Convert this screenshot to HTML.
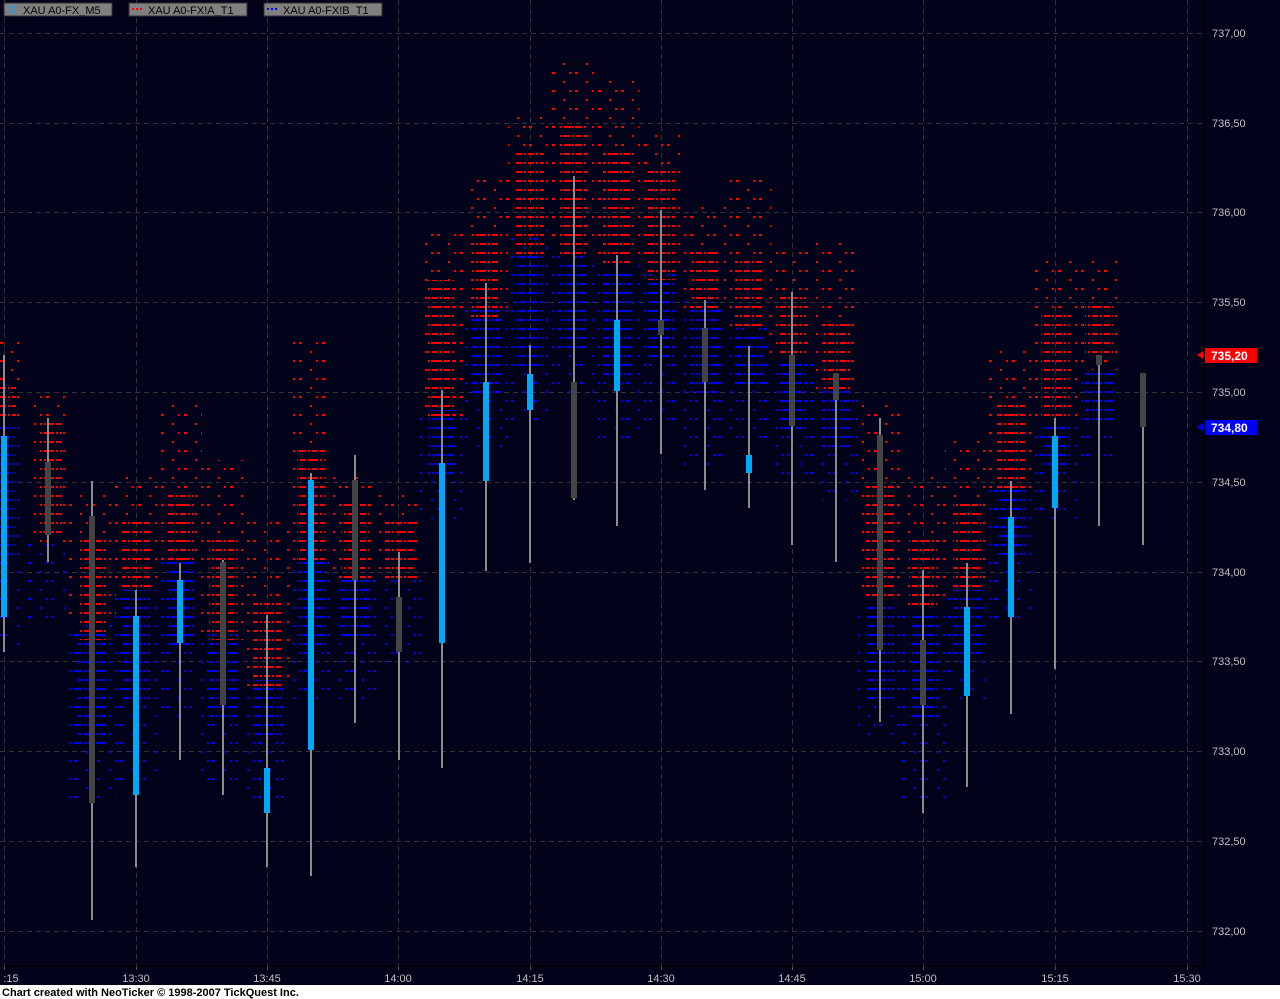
<!DOCTYPE html>
<html><head><meta charset="utf-8"><style>
html,body{margin:0;padding:0;background:#02021a;width:1280px;height:999px;overflow:hidden}
svg{display:block}
text{font-family:"Liberation Sans","DejaVu Sans",sans-serif}
</style></head><body>
<svg width="1280" height="999" viewBox="0 0 1280 999" xmlns="http://www.w3.org/2000/svg">
<defs>
<pattern id="rd" width="12" height="9" patternUnits="userSpaceOnUse"><rect x="0" y="0" width="6" height="2" fill="#f00"/><rect x="8" y="0" width="2" height="2" fill="#f00"/></pattern>
<pattern id="rs" width="23" height="18" patternUnits="userSpaceOnUse"><rect x="0" y="0" width="3" height="2" fill="#f00"/><rect x="11" y="9" width="2" height="2" fill="#f00"/><rect x="17" y="0" width="2" height="2" fill="#f00"/></pattern>
<pattern id="bd" width="12" height="9" patternUnits="userSpaceOnUse" x="3" y="4"><rect x="0" y="0" width="7" height="2" fill="#00f"/><rect x="9" y="0" width="2" height="2" fill="#00f"/></pattern>
<pattern id="bs" width="23" height="18" patternUnits="userSpaceOnUse" x="5" y="4"><rect x="0" y="0" width="3" height="2" fill="#00f"/><rect x="12" y="9" width="2" height="2" fill="#00f"/><rect x="18" y="0" width="2" height="2" fill="#00f"/></pattern>
</defs>
<rect width="1280" height="999" fill="#02021a"/>
<g stroke="#333" stroke-dasharray="5,4" stroke-width="1">
<line x1="0" y1="33.5" x2="1204" y2="33.5"/><line x1="0" y1="123.5" x2="1204" y2="123.5"/><line x1="0" y1="212.5" x2="1204" y2="212.5"/><line x1="0" y1="302.5" x2="1204" y2="302.5"/><line x1="0" y1="392.5" x2="1204" y2="392.5"/><line x1="0" y1="482.5" x2="1204" y2="482.5"/><line x1="0" y1="572.5" x2="1204" y2="572.5"/><line x1="0" y1="661.5" x2="1204" y2="661.5"/><line x1="0" y1="751.5" x2="1204" y2="751.5"/><line x1="0" y1="841.5" x2="1204" y2="841.5"/><line x1="0" y1="931.5" x2="1204" y2="931.5"/>
<line x1="4.5" y1="0" x2="4.5" y2="965"/><line x1="136.5" y1="0" x2="136.5" y2="965"/><line x1="267.5" y1="0" x2="267.5" y2="965"/><line x1="398.5" y1="0" x2="398.5" y2="965"/><line x1="530.5" y1="0" x2="530.5" y2="965"/><line x1="661.5" y1="0" x2="661.5" y2="965"/><line x1="792.5" y1="0" x2="792.5" y2="965"/><line x1="923.5" y1="0" x2="923.5" y2="965"/><line x1="1055.5" y1="0" x2="1055.5" y2="965"/><line x1="1187.5" y1="0" x2="1187.5" y2="965"/>
</g>
<g>
<rect x="-16" y="340" width="38" height="80" fill="url(#rs)"/><rect x="-16" y="420" width="38" height="230" fill="url(#bs)"/>
<rect x="28" y="395" width="40" height="150" fill="url(#rs)"/><rect x="28" y="540" width="40" height="80" fill="url(#bs)"/>
<rect x="68" y="490" width="48" height="130" fill="url(#rs)"/><rect x="68" y="620" width="48" height="180" fill="url(#bs)"/>
<rect x="114" y="470" width="44" height="120" fill="url(#rs)"/><rect x="114" y="590" width="44" height="190" fill="url(#bs)"/>
<rect x="158" y="400" width="44" height="160" fill="url(#rs)"/><rect x="158" y="560" width="44" height="160" fill="url(#bs)"/>
<rect x="201" y="460" width="44" height="180" fill="url(#rs)"/><rect x="201" y="630" width="44" height="150" fill="url(#bs)"/>
<rect x="245" y="520" width="44" height="170" fill="url(#rs)"/><rect x="245" y="680" width="44" height="120" fill="url(#bs)"/>
<rect x="289" y="340" width="44" height="220" fill="url(#rs)"/><rect x="289" y="560" width="44" height="140" fill="url(#bs)"/>
<rect x="333" y="470" width="44" height="110" fill="url(#rs)"/><rect x="333" y="580" width="44" height="120" fill="url(#bs)"/>
<rect x="377" y="490" width="44" height="90" fill="url(#rs)"/><rect x="377" y="580" width="44" height="90" fill="url(#bs)"/>
<rect x="420" y="230" width="44" height="190" fill="url(#rs)"/><rect x="420" y="410" width="44" height="110" fill="url(#bs)"/>
<rect x="464" y="180" width="44" height="140" fill="url(#rs)"/><rect x="464" y="310" width="44" height="140" fill="url(#bs)"/>
<rect x="508" y="110" width="44" height="120" fill="url(#rs)"/><rect x="508" y="230" width="44" height="190" fill="url(#bs)"/>
<rect x="552" y="60" width="44" height="190" fill="url(#rs)"/><rect x="552" y="250" width="44" height="150" fill="url(#bs)"/>
<rect x="595" y="80" width="44" height="180" fill="url(#rs)"/><rect x="595" y="260" width="44" height="180" fill="url(#bs)"/>
<rect x="639" y="130" width="44" height="140" fill="url(#rs)"/><rect x="639" y="270" width="44" height="150" fill="url(#bs)"/>
<rect x="683" y="200" width="44" height="110" fill="url(#rs)"/><rect x="683" y="300" width="44" height="170" fill="url(#bs)"/>
<rect x="727" y="180" width="44" height="150" fill="url(#rs)"/><rect x="727" y="320" width="44" height="120" fill="url(#bs)"/>
<rect x="770" y="250" width="44" height="110" fill="url(#rs)"/><rect x="770" y="360" width="44" height="120" fill="url(#bs)"/>
<rect x="814" y="240" width="44" height="150" fill="url(#rs)"/><rect x="814" y="390" width="44" height="110" fill="url(#bs)"/>
<rect x="858" y="400" width="44" height="200" fill="url(#rs)"/><rect x="858" y="600" width="44" height="140" fill="url(#bs)"/>
<rect x="901" y="470" width="44" height="140" fill="url(#rs)"/><rect x="901" y="610" width="44" height="190" fill="url(#bs)"/>
<rect x="945" y="440" width="44" height="150" fill="url(#rs)"/><rect x="945" y="590" width="44" height="110" fill="url(#bs)"/>
<rect x="989" y="350" width="44" height="140" fill="url(#rs)"/><rect x="989" y="490" width="44" height="130" fill="url(#bs)"/>
<rect x="1033" y="260" width="44" height="160" fill="url(#rs)"/><rect x="1033" y="420" width="44" height="100" fill="url(#bs)"/>
<rect x="1077" y="260" width="44" height="110" fill="url(#rs)"/><rect x="1077" y="370" width="40" height="90" fill="url(#bs)"/>
</g>
<g>
<rect x="-6" y="380" width="22" height="40" fill="url(#rd)"/><rect x="-6" y="420" width="22" height="140" fill="url(#bd)"/>
<rect x="40" y="420" width="22" height="120" fill="url(#rd)"/>
<rect x="78" y="540" width="28" height="100" fill="url(#rd)"/><rect x="78" y="630" width="28" height="120" fill="url(#bd)"/>
<rect x="122" y="520" width="28" height="70" fill="url(#rd)"/><rect x="122" y="590" width="28" height="110" fill="url(#bd)"/>
<rect x="166" y="490" width="28" height="70" fill="url(#rd)"/><rect x="166" y="560" width="28" height="90" fill="url(#bd)"/>
<rect x="209" y="540" width="28" height="100" fill="url(#rd)"/><rect x="209" y="640" width="28" height="80" fill="url(#bd)"/>
<rect x="253" y="600" width="28" height="90" fill="url(#rd)"/><rect x="253" y="680" width="28" height="60" fill="url(#bd)"/>
<rect x="297" y="450" width="28" height="110" fill="url(#rd)"/><rect x="297" y="560" width="28" height="90" fill="url(#bd)"/>
<rect x="341" y="500" width="28" height="80" fill="url(#rd)"/><rect x="341" y="580" width="28" height="60" fill="url(#bd)"/>
<rect x="385" y="520" width="28" height="60" fill="url(#rd)"/>
<rect x="428" y="280" width="28" height="140" fill="url(#rd)"/><rect x="428" y="410" width="28" height="70" fill="url(#bd)"/>
<rect x="472" y="230" width="28" height="90" fill="url(#rd)"/><rect x="472" y="310" width="28" height="90" fill="url(#bd)"/>
<rect x="516" y="150" width="28" height="110" fill="url(#rd)"/><rect x="516" y="250" width="28" height="120" fill="url(#bd)"/>
<rect x="560" y="120" width="28" height="140" fill="url(#rd)"/><rect x="560" y="260" width="28" height="90" fill="url(#bd)"/>
<rect x="603" y="150" width="28" height="120" fill="url(#rd)"/><rect x="603" y="270" width="28" height="110" fill="url(#bd)"/>
<rect x="647" y="170" width="28" height="110" fill="url(#rd)"/><rect x="647" y="280" width="28" height="80" fill="url(#bd)"/>
<rect x="691" y="250" width="28" height="60" fill="url(#rd)"/><rect x="691" y="310" width="28" height="90" fill="url(#bd)"/>
<rect x="735" y="260" width="28" height="70" fill="url(#rd)"/><rect x="735" y="330" width="28" height="60" fill="url(#bd)"/>
<rect x="778" y="290" width="28" height="70" fill="url(#rd)"/><rect x="778" y="360" width="28" height="70" fill="url(#bd)"/>
<rect x="822" y="320" width="28" height="70" fill="url(#rd)"/><rect x="822" y="390" width="28" height="60" fill="url(#bd)"/>
<rect x="866" y="480" width="28" height="120" fill="url(#rd)"/><rect x="866" y="600" width="28" height="100" fill="url(#bd)"/>
<rect x="909" y="540" width="28" height="70" fill="url(#rd)"/><rect x="909" y="610" width="28" height="110" fill="url(#bd)"/>
<rect x="953" y="500" width="28" height="90" fill="url(#rd)"/><rect x="953" y="590" width="28" height="70" fill="url(#bd)"/>
<rect x="997" y="400" width="28" height="90" fill="url(#rd)"/><rect x="997" y="490" width="28" height="70" fill="url(#bd)"/>
<rect x="1041" y="310" width="28" height="110" fill="url(#rd)"/><rect x="1041" y="420" width="28" height="50" fill="url(#bd)"/>
<rect x="1085" y="300" width="28" height="60" fill="url(#rd)"/><rect x="1085" y="370" width="28" height="50" fill="url(#bd)"/>
</g>
<g stroke="#8c8c8c" stroke-width="2">
<line x1="4" y1="355" x2="4" y2="652"/><line x1="48" y1="418" x2="48" y2="562"/><line x1="92" y1="481" x2="92" y2="920"/><line x1="136" y1="590" x2="136" y2="867"/><line x1="180" y1="563" x2="180" y2="760"/><line x1="223" y1="560" x2="223" y2="795"/><line x1="267" y1="615" x2="267" y2="867"/><line x1="311" y1="473" x2="311" y2="876"/><line x1="355" y1="455" x2="355" y2="723"/><line x1="399" y1="552" x2="399" y2="760"/><line x1="442" y1="390" x2="442" y2="768"/><line x1="486" y1="283" x2="486" y2="571"/><line x1="530" y1="345" x2="530" y2="563"/><line x1="574" y1="176" x2="574" y2="500"/><line x1="617" y1="255" x2="617" y2="526"/><line x1="661" y1="210" x2="661" y2="454"/><line x1="705" y1="300" x2="705" y2="490"/><line x1="749" y1="346" x2="749" y2="508"/><line x1="792" y1="292" x2="792" y2="545"/><line x1="836" y1="373" x2="836" y2="562"/><line x1="880" y1="418" x2="880" y2="722"/><line x1="923" y1="570" x2="923" y2="813"/><line x1="967" y1="563" x2="967" y2="787"/><line x1="1011" y1="481" x2="1011" y2="714"/><line x1="1055" y1="418" x2="1055" y2="669"/><line x1="1099" y1="355" x2="1099" y2="526"/><line x1="1143" y1="373" x2="1143" y2="545"/>
</g>
<g>
<rect x="1" y="436" width="6" height="181" fill="#00a8f8"/>
<rect x="45" y="462" width="6" height="73" fill="#444"/>
<rect x="89" y="516" width="6" height="287" fill="#444"/>
<rect x="133" y="616" width="6" height="179" fill="#00a8f8"/>
<rect x="177" y="580" width="6" height="63" fill="#00a8f8"/>
<rect x="220" y="562" width="6" height="143" fill="#444"/>
<rect x="264" y="768" width="6" height="45" fill="#00a8f8"/>
<rect x="308" y="480" width="6" height="270" fill="#00a8f8"/>
<rect x="352" y="480" width="6" height="100" fill="#444"/>
<rect x="396" y="597" width="6" height="55" fill="#444"/>
<rect x="439" y="463" width="6" height="180" fill="#00a8f8"/>
<rect x="483" y="382" width="6" height="99" fill="#00a8f8"/>
<rect x="527" y="374" width="6" height="36" fill="#00a8f8"/>
<rect x="571" y="382" width="6" height="116" fill="#444"/>
<rect x="614" y="320" width="6" height="71" fill="#00a8f8"/>
<rect x="658" y="320" width="6" height="15" fill="#444"/>
<rect x="702" y="328" width="6" height="54" fill="#444"/>
<rect x="746" y="455" width="6" height="18" fill="#00a8f8"/>
<rect x="789" y="355" width="6" height="71" fill="#444"/>
<rect x="833" y="373" width="6" height="27" fill="#444"/>
<rect x="877" y="435" width="6" height="215" fill="#444"/>
<rect x="920" y="640" width="6" height="65" fill="#444"/>
<rect x="964" y="607" width="6" height="89" fill="#00a8f8"/>
<rect x="1008" y="517" width="6" height="100" fill="#00a8f8"/>
<rect x="1052" y="436" width="6" height="72" fill="#00a8f8"/>
<rect x="1096" y="355" width="6" height="10" fill="#444"/>
<rect x="1140" y="373" width="6" height="54" fill="#444"/>
</g>
<g font-size="11" fill="#000">
<rect x="4" y="3" width="108" height="13" fill="#808080" stroke="#333"/>
<rect x="11" y="6" width="3" height="7" fill="none" stroke="#00a8f8"/><text x="23" y="14">XAU A0-FX_M5</text>
<rect x="129" y="3" width="118" height="13" fill="#808080" stroke="#333"/>
<rect x="132" y="8" width="2" height="2" fill="#f00"/><rect x="136" y="8" width="2" height="2" fill="#f00"/><rect x="140" y="8" width="2" height="2" fill="#f00"/><text x="148" y="14">XAU A0-FX!A_T1</text>
<rect x="264" y="3" width="118" height="13" fill="#808080" stroke="#333"/>
<rect x="267" y="8" width="2" height="2" fill="#00f"/><rect x="271" y="8" width="2" height="2" fill="#00f"/><rect x="275" y="8" width="2" height="2" fill="#00f"/><text x="283" y="14">XAU A0-FX!B_T1</text>
</g>
<line x1="1205" y1="0" x2="1205" y2="966" stroke="#000" stroke-width="2"/>
<g font-size="11" fill="#c0c0c0">
<text x="1212" y="37">737,00</text><text x="1212" y="127">736,50</text><text x="1212" y="216">736,00</text><text x="1212" y="306">735,50</text><text x="1212" y="396">735,00</text><text x="1212" y="486">734,50</text><text x="1212" y="576">734,00</text><text x="1212" y="665">733,50</text><text x="1212" y="755">733,00</text><text x="1212" y="845">732,50</text><text x="1212" y="935">732,00</text>
</g>
<polygon points="1197,355 1203,351 1203,359" fill="#f00"/>
<rect x="1205" y="348" width="52" height="15" fill="#f00"/>
<text x="1211" y="360" font-size="12" font-weight="bold" fill="#fff">735,20</text>
<polygon points="1197,427 1203,423 1203,431" fill="#00f"/>
<rect x="1205" y="420" width="52" height="15" fill="#00f"/>
<text x="1211" y="432" font-size="12" font-weight="bold" fill="#fff">734,80</text>
<line x1="0" y1="966" x2="1205" y2="966" stroke="#000" stroke-width="2"/>
<g stroke="#555"><line x1="4.5" y1="966" x2="4.5" y2="970"/><line x1="136.5" y1="966" x2="136.5" y2="970"/><line x1="267.5" y1="966" x2="267.5" y2="970"/><line x1="398.5" y1="966" x2="398.5" y2="970"/><line x1="530.5" y1="966" x2="530.5" y2="970"/><line x1="661.5" y1="966" x2="661.5" y2="970"/><line x1="792.5" y1="966" x2="792.5" y2="970"/><line x1="923.5" y1="966" x2="923.5" y2="970"/><line x1="1055.5" y1="966" x2="1055.5" y2="970"/><line x1="1187.5" y1="966" x2="1187.5" y2="970"/></g>
<g font-size="11" fill="#c0c0c0" text-anchor="middle">
<text x="11" y="982">:15</text><text x="136" y="982">13:30</text><text x="267" y="982">13:45</text><text x="398" y="982">14:00</text><text x="530" y="982">14:15</text><text x="661" y="982">14:30</text><text x="792" y="982">14:45</text><text x="923" y="982">15:00</text><text x="1055" y="982">15:15</text><text x="1187" y="982">15:30</text>
</g>
<rect x="0" y="985" width="1280" height="14" fill="#fff"/>
<text x="2" y="996" font-size="11" font-weight="bold" fill="#000">Chart created with NeoTicker © 1998-2007 TickQuest Inc.</text>
</svg>
</body></html>
